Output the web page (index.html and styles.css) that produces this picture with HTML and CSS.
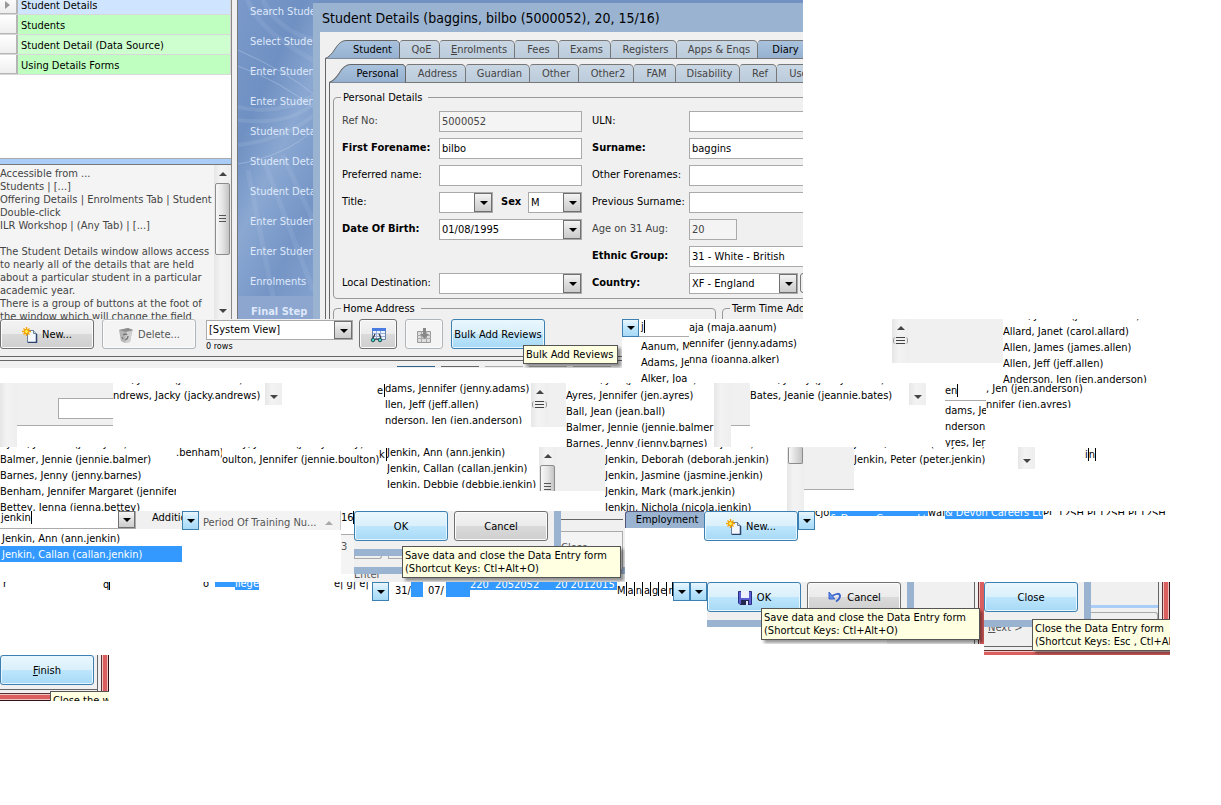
FILE: index.html
```html
<!DOCTYPE html>
<html lang="en">
<head>
<meta charset="utf-8">
<title>Student Details</title>
<link rel="stylesheet" href="styles.css">
</head>
<body>
<svg class="defs" aria-hidden="true">
  <defs>
    <linearGradient id="tabfill" x1="0" y1="0" x2="0" y2="1"><stop offset="0" stop-color="#a9c3de"/><stop offset="1" stop-color="#96b1d0"/></linearGradient>
    <symbol id="new" viewBox="0 0 16 16">
      <path d="M5.500 3.500h6l3 3v9h-9z" fill="#f4f8fd" stroke="#6b7f9e"/><path d="M14.500 7v8.500H6" fill="none" stroke="#2b446f" stroke-width="1.500"/><path d="M11.500 3.500v3h3" fill="#cfdcee" stroke="#6b7f9e"/>
      <path d="M4.500 0v9M0 4.500h9M1.500 1.500l6 6M7.500 1.500l-6 6" stroke="#f5a70a" stroke-width="1.400"/><circle cx="4.500" cy="4.500" r="2" fill="#fff04a" stroke="#f59b00"/>
    </symbol>
    <symbol id="bin" viewBox="0 0 16 16">
      <path d="M1 3l9-2 5 2-1 2-2 10-5 1-4-2z" fill="#b5b5b5"/><path d="M1 3l9-2 5 2-7 2z" fill="#8e8e8e"/><path d="M8 5l6-1-2 11-5 1z" fill="#d0d0d0"/><path d="M5 8q3-2 4 0M10 9q0 3-3 4M5 12l-1-2" fill="none" stroke="#777" stroke-width="1.300"/>
    </symbol>
    <symbol id="view" viewBox="0 0 16 16">
      <path d="M2.500 1.500h13v11h-13z" fill="#edf3fd" stroke="#6d83b5"/><path d="M2 1h14v3H2z" fill="#4a7be0"/><path d="M3 6.500h12M3 9.500h12M6.500 4v8M10.500 4v8" stroke="#9db1da"/><path d="M3 11l2-4M11 11l-2-4M5 12h4" stroke="#333" stroke-width="1.200"/><circle cx="3" cy="13" r="1.800" fill="#3fd6cf" stroke="#26504f"/><circle cx="10" cy="13" r="1.800" fill="#3fd6cf" stroke="#26504f"/>
    </symbol>
    <symbol id="export" viewBox="0 0 16 16">
      <path d="M1.500 4.500h13v11h-13z" fill="#ddd" stroke="#999"/><path d="M1 8.500h14M1 11.500h14M5.500 4v11M10.500 4v11" stroke="#aaa"/><path d="M7 1h3v6h3l-4.500 5L4 7h3z" fill="#888"/>
    </symbol>
    <symbol id="save" viewBox="0 0 16 16">
      <path d="M1.500 1.500h13v13H3l-1.500-1.500z" fill="#5a5fd0" stroke="#2c2f86"/><path d="M4 1h8v7H4z" fill="#eef1ff"/><path d="M4 10h8v5H4z" fill="#23264f"/><path d="M9 11h2v4H9z" fill="#dfe3ff"/>
    </symbol>
    <symbol id="undo" viewBox="0 0 16 16">
      <path d="M5 6q7-4 8-.5 0 3.500-4 6" fill="none" stroke="#3d66cc" stroke-width="2"/><path d="M2 2v7h6z" fill="#5f8ae6" stroke="#3d66cc"/>
    </symbol>
  </defs>
</svg>

<main class="sheet">
  <section class="band band-main">
    <div class="help-pane">
      <ul class="topics">
        <li class="topic current"><span class="handle"><i></i></span><span class="name">Student Details</span></li>
        <li class="topic"><span class="handle"></span><span class="name">Students</span></li>
        <li class="topic alt"><span class="handle"></span><span class="name">Student Detail (Data Source)</span></li>
        <li class="topic"><span class="handle"></span><span class="name">Using Details Forms</span></li>
      </ul>
      <div class="splitter"></div>
      <div class="notes">
        <p class="notes-text">Accessible from ...<br>Students | [...]<br>Offering Details | Enrolments Tab | Student<br>Double-click<br>ILR Workshop | (Any Tab) | [...]<br><br>The Student Details window allows access<br>to nearly all of the details that are held<br>about a particular student in a particular<br>academic year.<br>There is a group of buttons at the foot of<br>the window which will change the field</p>
        <div class="scroll full"><i class="up"></i><b class="thumb"></b><i class="down"></i></div>
      </div>
    </div>
    <div class="divider"></div>
    <nav class="steps">
      <svg class="swirl" viewBox="0 0 76 319" preserveAspectRatio="none" aria-hidden="true"><g fill="none" stroke="#c4d5ee"><path d="M0 66Q45 82 76 108M0 50Q50 72 76 94M0 164Q50 155 76 130" stroke-opacity=".4"/><path d="M0 107Q40 116 76 96M0 120Q50 126 76 104M0 145Q45 140 76 116" stroke-width="4" stroke-opacity=".15"/><path d="M26 160L76 290M10 170L40 319M45 155L76 220M10 0Q20 30 76 60M25 0Q40 30 76 40" stroke-width="5" stroke-opacity=".12"/></g></svg>
      <span>Search Student</span><span>Select Student</span><span>Enter Student</span><span>Enter Student</span><span>Student Details</span><span>Student Details</span><span>Student Details</span><span>Enter Student</span><span>Enter Student</span><span>Enrolments</span><strong>Final Step</strong>
    </nav>
    <div class="stage">
      <div class="window">
        <h1 class="title">Student Details (baggins, bilbo (5000052), 20, 15/16)</h1>
        <div class="client">
          <div class="tabs outer" role="tablist">
            <button class="tab lead w75" role="tab"><svg viewBox="0 0 75 19" aria-hidden="true"><path d="M0 18.500Q5 17 10 9Q15 .500 21 .500H72L74.500 3V18.500" fill="url(#tabfill)" stroke="#666"/></svg><span>Student</span></button><button class="tab w40" role="tab">QoE</button><button class="tab w75" role="tab"><span><u>E</u>nrolments</span></button><button class="tab w44" role="tab">Fees</button><button class="tab w52" role="tab">Exams</button><button class="tab w66" role="tab">Registers</button><button class="tab w81" role="tab">Apps &amp; Enqs</button><button class="tab on w52" role="tab">Diary</button>
          </div>
          <div class="page-outer">
            <div class="tabs inner" role="tablist">
              <button class="tab lead w77" role="tab"><svg viewBox="0 0 75 19" preserveAspectRatio="none" aria-hidden="true"><path d="M0 18.500Q5 17 10 9Q15 .500 21 .500H72L74.500 3V18.500" fill="url(#tabfill)" stroke="#666"/></svg><span>Personal</span></button><button class="tab w60" role="tab">Address</button><button class="tab w64" role="tab">Guardian</button><button class="tab w49" role="tab">Other</button><button class="tab w55" role="tab">Other2</button><button class="tab w42" role="tab">FAM</button><button class="tab w64" role="tab">Disability</button><button class="tab w37" role="tab">Ref</button><button class="tab w44" role="tab">User</button>
            </div>
            <div class="page-inner">
              <fieldset class="group personal">
                <legend>Personal Details</legend>
                <div class="form">
                  <label class="muted" for="ref">Ref No:</label><input id="ref" class="field ro" value="5000052" readonly>
                  <label for="uln">ULN:</label><input id="uln" class="field">
                  <label class="req" for="fore">First Forename:</label><input id="fore" class="field" value="bilbo">
                  <label class="req" for="sur">Surname:</label><input id="sur" class="field" value="baggins">
                  <label for="pref">Preferred name:</label><input id="pref" class="field">
                  <label for="oth">Other Forenames:</label><input id="oth" class="field">
                  <label for="ttl">Title:</label>
                  <div class="pair"><span class="combo"><select id="ttl"><option></option></select></span><label class="req" for="sex">Sex</label><span class="combo"><select id="sex"><option>M</option></select></span></div>
                  <label for="prev">Previous Surname:</label><input id="prev" class="field">
                  <label class="req" for="dob">Date Of Birth:</label><span class="combo"><select id="dob"><option>01/08/1995</option></select></span>
                  <label class="muted" for="age">Age on 31 Aug:</label><input id="age" class="field ro short" value="20" readonly>
                  <span></span><span></span>
                  <label class="req" for="eth">Ethnic Group:</label><input id="eth" class="field" value="31 - White - British">
                  <label for="dest">Local Destination:</label><span class="combo"><select id="dest"><option></option></select></span>
                  <label class="req" for="cty">Country:</label><div class="pair country"><span class="combo"><select id="cty"><option>XF - England</option></select></span><button class="mini" aria-label="More"></button></div>
                </div>
              </fieldset>
              <div class="addresses">
                <fieldset class="group"><legend>Home Address</legend></fieldset>
                <fieldset class="group"><legend>Term Time Address</legend></fieldset>
              </div>
            </div>
          </div>
        </div>
      </div>
    </div>
  </section>

  <section class="band">
    <div class="frag toolbar">
      <div class="tools">
        <button class="btn"><svg class="ico"><use href="#new"/></svg>New...</button>
        <button class="btn off"><svg class="ico"><use href="#bin"/></svg>Delete...</button>
        <div class="view"><span class="combo"><select aria-label="View"><option>[System View]</option></select></span><small>0 rows</small></div>
        <button class="btn square" aria-label="Find"><svg class="ico"><use href="#view"/></svg></button>
        <button class="btn square off" aria-label="Export"><svg class="ico"><use href="#export"/></svg></button>
        <button class="btn hot">Bulk Add Reviews</button>
      </div>
      <div class="rule"></div>
      <div class="stubs"><i class="blue"></i><i class="dark"></i><i></i><i></i><i></i></div>
      <div class="tip tip-bulk">Bulk Add Reviews</div>
    </div>
    <div class="frag w67 tall">
      <div class="entry"><button class="drop" aria-label="Open list"></button><span class="typed">j</span></div>
      <ul class="names inset"><li>Aanum, M</li><li>Adams, Je</li><li>Alker, Joa</li></ul>
    </div>
    <ul class="frag names w203 h44"><li>aja (maja.aanum)</li><li>ennifer (jenny.adams)</li><li>nna (joanna.alker)</li></ul>
    <div class="frag gray w111 h44"><div class="scroll"><i class="up"></i><b class="grip"></b></div></div>
    <ul class="frag names scrolled w203 tall"><li>Alker, Joanna (joanna.alker)</li><li>Allard, Janet (carol.allard)</li><li>Allen, James (james.allen)</li><li>Allen, Jeff (jeff.allen)</li><li>Anderson, Jen (jen.anderson)</li></ul>
  </section>

  <section class="band">
    <div class="frag w113 tall row"><div class="scroll"></div><div class="plate"><span class="box"></span></div></div>
    <ul class="frag names scrolled w152 tall"><li>lker, Joanna (joanna.alker)</li><li>ndrews, Jacky (jacky.andrews)</li></ul>
    <div class="frag w112 h22"><div class="scroll"><i class="down"></i></div></div>
    <div class="frag w8 typed low">e</div>
    <ul class="frag names raised w146 h41"><li>dams, Jennifer (jenny.adams)</li><li>llen, Jeff (jeff.allen)</li><li>nderson, Jen (jen.anderson)</li></ul>
    <div class="frag gray w35 h44"><div class="scroll"><i class="up"></i><b class="grip"></b></div></div>
    <ul class="frag names scrolled w148 tall"><li>derson, Jen (jen.anderson)</li><li>Ayres, Jennifer (jen.ayres)</li><li>Ball, Jean (jean.ball)</li><li>Balmer, Jennie (jennie.balmer)</li><li>Barnes, Jenny (jenny.barnes)</li></ul>
    <div class="frag w36 tall row"><div class="scroll"></div><div class="plate"></div></div>
    <ul class="frag names scrolled w159 tall"><li>arnes, Jenny (jenny.barnes)</li><li>Bates, Jeanie (jeannie.bates)</li></ul>
    <div class="frag w36 h22"><div class="scroll"><i class="down"></i></div></div>
    <div class="frag w41 tall"><div class="entry plain"><span class="typed">en</span></div><ul class="names"><li>dams, Je</li><li>nderson,</li><li>yres, Jer</li></ul></div>
    <ul class="frag names raised w203 h25"><li>, Jen (jen.anderson)</li><li>nnifer (jen.ayres)</li></ul>
  </section>

  <section class="band">
    <ul class="frag names scrolled w176 tall"><li>Ayres, Jennifer (jen.ayres)</li><li>Balmer, Jennie (jennie.balmer)</li><li>Barnes, Jenny (jenny.barnes)</li><li>Benham, Jennifer Margaret (jennifer</li><li>Bettey, Jenna (jenna.bettey)</li></ul>
    <ul class="frag names raised w46 h41"><li>.benham)</li></ul>
    <ul class="frag names scrolled w157 tall"><li>ettey, Jennifer (jenny.bettey)</li><li>oulton, Jennifer (jennie.boulton)</li></ul>
    <div class="frag w8 typed low">k</div>
    <ul class="frag names raised w152 h41"><li>Jenkin, Ann (ann.jenkin)</li><li>Jenkin, Callan (callan.jenkin)</li><li>Jenkin, Debbie (debbie.jenkin)</li></ul>
    <div class="frag gray w66 h44"><div class="scroll"><i class="up"></i><b class="thumb"></b></div></div>
    <ul class="frag names scrolled w182 tall"><li>Jenkin, Debbie (debbie.jenkin)</li><li>Jenkin, Deborah (deborah.jenkin)</li><li>Jenkin, Jasmine (jasmine.jenkin)</li><li>Jenkin, Mark (mark.jenkin)</li><li>Jenkin, Nichola (nicola.jenkin)</li></ul>
    <div class="frag w67 tall row"><div class="scroll"><b class="thumb end"></b></div><div class="plate"></div></div>
    <ul class="frag names scrolled w164 tall"><li>Jenkin, Nichola (nic.jenkin)</li><li>Jenkin, Peter (peter.jenkin)</li></ul>
    <div class="frag w67 h22"><div class="scroll"><i class="down"></i></div></div>
    <div class="frag typed low"><span class="typed">i</span>n</div>
  </section>

  <section class="band band-low">
    <div class="frag w182 picker">
      <div class="row"><div class="search"><span class="typed">jenkin</span><button class="drop plain" aria-label="Open list"></button></div><span class="side">Additic</span></div>
      <ul class="names padded"><li>Jenkin, Ann (ann.jenkin)</li><li class="picked">Jenkin, Callan (callan.jenkin)</li></ul>
    </div>
    <button class="drop" aria-label="Open list"></button>
    <div class="head"><span>Period Of Training Nu...</span><i class="asc"></i></div>
    <div class="frag w13 cells"><span class="typed">16</span><span class="cell">3</span></div>
    <div class="frag dialog w271">
      <div class="actions"><button class="btn hot">OK</button><button class="btn">Cancel</button></div>
      <div class="under"><i></i><i></i></div>
      <div class="foot"><span>Enter</span></div>
      <div class="corner"><span>Close</span></div>
      <div class="edge"></div>
      <div class="tip tip-save">Save data and close the Data Entry form<br>(Shortcut Keys: Ctl+Alt+O)</div>
    </div>
    <button class="employment">Employment</button>
    <button class="btn hot"><svg class="ico"><use href="#new"/></svg>New...</button>
    <button class="drop" aria-label="Open list"></button>
    <div class="shards top"><span class="w15">cjorn</span><mark class="w98 cut">&amp; Devon Careers Ltd</mark><span class="w17">wall</span><mark class="w98">&amp; Devon Careers Ltd</mark><span class="faded">PL 12SH PL12SH PL12SH</span></div>
  </section>

  <section class="band band-low">
    <div class="shards low"><span class="w100">r</span><span class="w100"><span class="typed">q</span></span><span class="w12">o</span><mark class="w20 block"></mark><mark class="w24">llege</mark><span class="w75"></span><span>e| g| e|</span></div>
    <button class="drop" aria-label="Open list"></button>
    <div class="dates"><span>31/</span><mark></mark><span class="w17">07/</span><mark class="w24"></mark><mark class="strip">220 &nbsp;2052052 &nbsp; &nbsp; 20 2012015</mark></div>
    <div class="letters"><span>M</span><span>a</span><span>n</span><span>a</span><span>g</span><span>e</span><span>r</span></div>
    <button class="drop" aria-label="Open list"></button><button class="drop" aria-label="Open list"></button>
    <div class="frag dialog framed w277">
      <div class="actions"><button class="btn hot"><svg class="ico"><use href="#save"/></svg>OK</button><button class="btn"><svg class="ico"><use href="#undo"/></svg>Cancel</button></div>
      <div class="edge"></div>
      <div class="redline"></div>
      <div class="tip tip-save2">Save data and close the Data Entry form<br>(Shortcut Keys: Ctl+Alt+O)</div>
    </div>
    <div class="frag dialog close-box w186">
      <div class="actions"><button class="btn hot">Close</button></div>
      <div class="edge"></div>
      <div class="panel-end"></div>
      <div class="redline"></div>
      <div class="foot"><span><u>N</u>ext &gt;</span></div>
      <div class="redfoot"></div>
      <div class="tip tip-close">Close the Data Entry form<br>(Shortcut Keys: Esc , Ctl+Alt+C)</div>
    </div>
  </section>

  <section class="band">
    <div class="frag dialog finish w109">
      <div class="actions"><button class="btn hot"><span><u>F</u>inish</span></button></div>
      <div class="redfoot"></div>
      <div class="redline"></div>
      <div class="tip tip-finish">Close the window</div>
    </div>
  </section>
</main>
</body>
</html>
```
FILE: styles.css
```css
* { box-sizing: border-box; }
body { margin: 0; background: #fff; color: #000; font: 11px/16px "DejaVu Sans Condensed", "DejaVu Sans", sans-serif; font-stretch: condensed; overflow: hidden; }
button, input, select { font: inherit; color: inherit; margin: 0; padding: 0; border-radius: 0; }
ul { list-style: none; margin: 0; padding: 0; }
p { margin: 0; }
.defs { position: absolute; width: 0; height: 0; }
.band { display: flex; align-items: flex-start; min-height: 64px; white-space: nowrap; }
.band-main { height: 319px; max-width: 803px; overflow: hidden; }
.band-low { min-height: 71px; }
.band-low + .band-low { min-height: 73px; }
.frag { flex: none; overflow: hidden; position: relative; }
.row { display: flex; align-items: flex-start; }

.w8 { width: 8px; } .w12 { width: 12px; } .w13 { width: 13px; } .w15 { width: 15px; } .w17 { width: 17px; }
.w20 { width: 20px; } .w24 { width: 24px; } .w35 { width: 35px; } .w36 { width: 36px; }
.w37 { width: 37px; } .w40 { width: 40px; } .w41 { width: 41px; } .w42 { width: 42px; } .w44 { width: 44px; }
.w46 { width: 46px; } .w49 { width: 49px; } .w52 { width: 52px; } .w55 { width: 55px; } .w60 { width: 60px; }
.w64 { width: 64px; } .w66 { width: 66px; } .w67 { width: 67px; } .w75 { width: 75px; } .w77 { width: 77px; }
.w81 { width: 81px; } .w98 { width: 98px; } .w100 { width: 100px; } .w109 { width: 109px; }
.w111 { width: 111px; } .w112 { width: 112px; } .w113 { width: 113px; } .w146 { width: 146px; } .w148 { width: 148px; }
.w152 { width: 152px; } .w157 { width: 157px; } .w159 { width: 159px; } .w164 { width: 164px; } .w176 { width: 176px; }
.w182 { width: 182px; } .w186 { width: 186px; } .w203 { width: 203px; } .w271 { width: 271px; } .w277 { width: 277px; }
.tall { height: 64px; } .h22 { height: 22px; } .h25 { height: 25px; } .h41 { height: 41px; } .h44 { height: 44px; }

/* help pane */
.help-pane { width: 231px; height: 319px; flex: none; display: flex; flex-direction: column; }
.topics { height: 159px; overflow: hidden; border-bottom: 1px solid #aaa; }
.topic { display: flex; height: 20px; background: #bfffbf; border-bottom: 1px solid #d8d8d8; border-right: 1px solid #d8d8d8; }
.topic.alt { background: #ceffce; }
.topic.current { margin-top: -5px; background: #cfe5ff; }
.handle { width: 18px; flex: none; background: linear-gradient(#fff, #eee); border-right: 2px solid #b5b5b5; border-bottom: 1px solid #b5b5b5; }
.handle i { display: block; margin: 6px 5px; border: 4px solid transparent; border-left: 5px solid #999; border-right: 0; }
.name { padding-left: 3px; line-height: 22px; }
.splitter { height: 5px; background: #a9cdf7; }
.notes { flex: 1; min-height: 0; display: flex; overflow: hidden; background: #f4f4f4; border-top: 1px solid #777; }
.notes-text { flex: 1; min-width: 0; padding-top: 2px; line-height: 13px; color: #444; }
.divider { width: 7px; height: 319px; flex: none; background: #f0f0f0; border-left: 1px solid #888; border-right: 1px solid #777; }

/* scroll bars */
.scroll { width: 17px; height: 100%; flex: none; background: linear-gradient(90deg, #e6e6e6, #f3f3f3 40%, #eee); display: flex; flex-direction: column; align-items: center; overflow: hidden; }
.up, .down { flex: none; width: 0; height: 0; border: 4px solid transparent; }
.up { border-bottom-color: #444; border-top: 0; margin: 7px 0; }
.down { border-top-color: #444; border-bottom: 0; margin: auto 0 6px; }
.thumb { flex: none; width: 15px; height: 72px; border: 1px solid #8c8c8c; border-radius: 2px; background: repeating-linear-gradient(#555 0 1px, transparent 1px 3px) 50% 50% / 7px 9px no-repeat, linear-gradient(90deg, #f8f8f8, #e4e4e4 50%, #c4c4c6); }
.h44 .thumb { height: 44px; }
.thumb.end { height: 17px; background: linear-gradient(90deg, #f8f8f8, #c4c4c6); border-top: 0; }
.grip { width: 15px; height: 7px; border: 1px solid #999; border-width: 0 1px; border-radius: 3px; background: repeating-linear-gradient(#444 0 1px, transparent 1px 3px) 50% 50% / 9px 7px no-repeat; }
.gray { background: #f0f0f0; }

/* steps */
.steps { position: relative; width: 75px; height: 319px; flex: none; overflow: hidden; background: linear-gradient(115deg, #7b9acb, #6f90c2 30%, #8ba8d2 50%, #7595c6 75%, #86a3cf); color: #dfe9fb; display: flex; flex-direction: column; }
.swirl { position: absolute; inset: 0; width: 100%; height: 100%; }
.steps span, .steps strong { position: relative; flex: none; height: 30px; line-height: 32px; padding-left: 12px; }
.steps span:first-of-type { margin-top: -4px; }
.steps strong { background: #8ca6cf; padding-left: 13px; }
.stage { flex: 1; height: 319px; min-width: 0; padding-top: 3px; background: #7192c3; overflow: hidden; }

/* window */
.window { background: #9ab3d1; padding-left: 7px; height: 316px; }
.title { margin: 0; font-size: 14px; font-weight: 400; line-height: 30px; height: 29px; padding-left: 2px; }
.client { background: #f0f0f0; padding: 8px 0 0 5px; height: 290px; overflow: hidden; }
.tabs { display: flex; height: 19px; border-bottom: 1px solid #666; }
.tab { position: relative; flex: none; height: 19px; border: 1px solid #777; border-left: 0; border-radius: 3px 5px 0 0; background: linear-gradient(#c9d7e4, #bccbdb); color: #444; line-height: 17px; padding-left: 4px; }
.tab.on { background: linear-gradient(#a9c3de, #96b1d0); color: #000; }
.tab.lead { border: 0; background: none; color: #000; padding-left: 20px; }
.tab.lead svg { position: absolute; left: 0; top: 0; width: 100%; height: 19px; }
.tab.lead span { position: relative; }
.page-outer { border-left: 1px solid #666; padding: 5px 0 0 3px; }
.page-inner { border-left: 1px solid #666; padding: 8px 0 0 3px; }
.group { margin: 0; padding: 0 0 0 8px; border: 1px solid #999; border-radius: 4px; min-width: 0; }
.group legend { padding: 0 6px 0 2px; margin-left: -1px; line-height: 13px; }
.personal { margin-right: -8px; height: 208px; }
.form { display: grid; grid-template-columns: 97px 153px 97px minmax(0, 1fr); grid-auto-rows: 21px; row-gap: 6px; margin-top: 7px; }
.form label { line-height: 20px; }
.muted { color: #444; }
.req { font-weight: 700; }
.field { width: 100%; height: 21px; border: 1px solid #aaa; background: #fff; padding-left: 2px; outline: 0; }
.form > .field:nth-child(4n+2), .form > .combo { width: 143px; }
.ro { background: #f4f4f4; color: #444; }
.form > .field.short { width: 48px; }
.pair { display: grid; grid-template-columns: 54px 35px 54px; align-items: start; }
.pair .req { padding-left: 8px; }
.pair.country { grid-template-columns: 109px 20px; gap: 2px; }
.mini { height: 20px; border: 1px solid #777; border-radius: 3px; background: #eee; }
.combo { position: relative; display: block; height: 21px; }
.combo select { appearance: none; width: 100%; height: 100%; border: 1px solid #aaa; background: #fff; padding: 0 18px 0 2px; outline: 0; }
.combo::after { content: ""; position: absolute; right: 1px; top: 1px; width: 16px; bottom: 1px; border: 1px solid #707070; background: linear-gradient(#f4f4f4, #ddd 50%, #ccc); pointer-events: none; }
.combo::before { content: ""; position: absolute; z-index: 1; right: 5px; top: 9px; border: 4px solid transparent; border-top-color: #000; border-bottom: 0; pointer-events: none; }
.addresses { display: grid; grid-template-columns: 383px 120px; gap: 6px; margin-top: 3px; }
.addresses .group { height: 60px; }

/* buttons */
.btn { flex: none; width: 94px; height: 30px; padding-top: 2px; display: flex; align-items: center; justify-content: center; gap: 4px; border: 1px solid #707070; border-radius: 3px; background: linear-gradient(#f3f3f3, #ebebeb 50%, #dadada 50%, #cfcfcf); box-shadow: inset 0 0 0 1px #fbfbfb; }
.btn.hot { border-color: #3c7fb1; background: linear-gradient(#eaf6fd, #d9f0fc 50%, #bee6fd 50%, #a7d9f5); box-shadow: inset 0 0 0 1px #e8f6fd; }
.btn.off { border-color: #b0b5ba; background: #f4f4f4; color: #555; }
.btn.square { width: 38px; }
.ico { width: 16px; height: 16px; flex: none; }
.drop { flex: none; width: 17px; height: 19px; border: 1px solid #3c7fb1; background: linear-gradient(#eaf6fd, #bee6fd 50%, #a7d9f5); display: flex; align-items: center; justify-content: center; }
.drop::before { content: ""; border: 4px solid transparent; border-top-color: #000; border-bottom: 0; }
.drop.plain { height: 17px; border-color: #707070; background: linear-gradient(#f4f4f4, #ccc); }
.tip { position: absolute; z-index: 2; padding: 2px; line-height: 13px; background: #ffffe1; border: 1px solid #555; box-shadow: 3px 3px 3px rgba(0, 0, 0, .4); }
.tip-bulk { left: 523px; top: 26px; width: 95px; height: 19px; }
.tip-save { left: 48px; top: 35px; width: 219px; height: 32px; }
.tip-save2 { left: 54px; top: 26px; width: 219px; height: 32px; }
.tip-close { left: 48px; top: 37px; width: 219px; height: 32px; }
.tip-finish { left: 50px; top: 36px; width: 120px; height: 19px; }

/* toolbar */
.toolbar { width: 622px; height: 49px; background: #f0f0f0; }
.tools { display: flex; gap: 8px; height: 37px; }
.view { width: 149px; padding: 1px 0 0 2px; margin-right: -2px; }
.view .combo { height: 20px; }
.view small { display: block; font-size: 9px; line-height: 12px; }
.rule { height: 5px; border: 1px solid #666; border-width: 1px 0; }
.stubs { display: flex; gap: 6px; margin: 5px 0 0 397px; }
.stubs i { width: 38px; height: 2px; border-top: 1px solid #aaa; }
.stubs .blue { border-color: #2c628b; } .stubs .dark { border-color: #666; }

/* name lists */
.names li { height: 16px; line-height: 18px; white-space: pre; }
.scrolled li:first-child { margin-top: -12px; }
.raised li:first-child { margin-top: -3px; }
.inset { padding-left: 19px; }
.padded { padding-top: 1px; }
.padded li { padding-left: 2px; }
.picked { background: #3399ff; color: #fff; }
.entry { display: flex; height: 18px; margin-bottom: 1px; background: linear-gradient(#aaa, #aaa) bottom / 100% 1px no-repeat; }
.typed { border-right: 1px solid #000; height: 13px; line-height: 14px; }
.entry .drop { height: 18px; }
.entry .typed { margin: 1px 0 0 2px; }
.entry.plain .typed { margin-left: 0; }
.low { margin-top: 1px; }
.plate { flex: 1; height: 43px; background: #f0f0f0; border-bottom: 1px solid #aaa; padding: 15px 0 0 41px; }
.box { display: block; height: 21px; border: 1px solid #aaa; border-right: 0; background: #fff; }
.plate:empty { padding: 0; }

/* lower fragments */
.search { display: flex; justify-content: space-between; width: 136px; height: 18px; border: 1px solid #aaa; border-width: 0 1px 1px 0; }
.search .typed { padding-left: 1px; }
.side { width: 46px; height: 18px; line-height: 14px; padding-left: 16px; background: #f0f0f0; overflow: hidden; }
.head { flex: none; width: 142px; height: 19px; display: flex; align-items: center; justify-content: space-between; padding: 4px 7px 0 4px; background: #f3f3f3; border-right: 1px solid #ccc; color: #555; }
.asc { border: 4px solid transparent; border-bottom-color: #aaa; border-top: 0; }
.cells { height: 71px; display: flex; flex-direction: column; }
.cell { height: 40px; margin-top: 10px; padding-top: 4px; border-top: 1px solid #aaa; color: #555; background: #f4f4f4; }
.dialog { background: #f0f0f0; height: 71px; }
.actions { display: flex; gap: 6px; height: 38px; }
.edge { position: absolute; left: 200px; top: 0; width: 7px; height: 45px; background: #9ab3d1; }
.under { height: 25px; border: solid #9ab3d1; border-width: 7px 0; display: flex; gap: 6px; }
.under i { width: 28px; height: 3px; border: 1px solid #aaa; border-top: 0; border-radius: 0 0 3px 0; }
.corner { position: absolute; left: 207px; top: 0; width: 64px; height: 56px; padding: 8px 2px 0 0; background: #f0f0f0; }
.corner::before { content: ""; display: block; height: 11px; border-top: 1px solid #666; border-bottom: 1px solid #aaa; }
.corner span { display: block; line-height: 13px; height: 37px; padding-top: 9px; color: #555; border-right: 1px solid #aaa; background: #f4f4f4; }
.foot { height: 8px; overflow: hidden; color: #555; }
.foot span { display: block; margin-top: -7px; }
.employment { flex: none; width: 79px; height: 17px; border: 1px solid #557; border-width: 1px 0 0 1px; border-radius: 3px 0 0 0; background: #9ab3d1; padding-left: 4px; }
.shards { display: flex; overflow: hidden; }
.shards > * { flex: none; overflow: hidden; height: 12px; line-height: 12px; }
.shards.top { height: 8px; }
.shards.top > * { margin-top: -4px; }
.shards.top .cut { margin-top: 0; height: 5px; line-height: 16px; }
.shards.top .faded { height: 8px; line-height: 14px; }
mark { background: #3399ff; color: #fff; }
.shards.low { width: 372px; height: 8px; padding-left: 3px; margin: 0; flex: none; }
.shards.low > * { margin-top: -4px; }
.shards.low .block { height: 9px; }
.dates { width: 228px; flex: none; display: flex; padding-left: 6px; align-items: flex-start; }
.dates span, .dates mark:not(.strip) { height: 15px; line-height: 18px; }
.dates > mark:first-of-type { width: 12px; margin-right: 5px; }
.dates > .w24 { margin-left: 1px; }
.dates > .strip { flex: 1; min-width: 0; height: 8px; line-height: 6px; overflow: hidden; }
.letters { width: 56px; flex: none; display: flex; gap: 1px; overflow: hidden; }
.letters span { border-right: 1px solid #000; height: 14px; line-height: 18px; }
.framed { height: 62px; }
.framed::before { content: ""; position: absolute; top: 38px; width: 200px; height: 7px; background: #9ab3d1; }
.framed::after { content: ""; position: absolute; top: 45px; width: 180px; height: 17px; background: #fff; }
.redline { position: absolute; top: 0; right: 0; height: 100%; width: 12px; background: linear-gradient(90deg, #666 1px, #f0f0f0 1px 4px, #5e3030 4px 5px, #efc4c4 5px 6px, #dc5f5f 6px 10px, #efc4c4 10px 11px, #301015 11px); }
.framed .redline { width: 10px; }
.redfoot { position: absolute; left: 0; right: 0; bottom: 0; height: 12px; background: linear-gradient(#666 1px, #f0f0f0 1px 4px, #5e3030 4px 5px, #efc4c4 5px 6px, #dc5f5f 6px 10px, #efc4c4 10px 11px, #301015 11px); }
.close-box { height: 73px; }
.close-box::before { content: ""; position: absolute; left: 0; top: 38px; width: 107px; height: 7px; background: #9ab3d1; }
.close-box .edge { left: 100px; }
.close-box .foot { height: 18px; margin-top: 7px; }
.close-box .foot span { margin-top: -7px; padding-left: 4px; }
.close-box .redfoot { height: 9px; }
.panel-end { position: absolute; left: 107px; top: 23px; width: 67px; height: 20px; border-top: 3px solid #a9cdf7; }
.panel-end::after { content: ""; display: block; margin-top: 4px; height: 8px; border: 1px solid #aaa; border-left: 0; border-bottom: 0; border-radius: 0 3px 0 0; }
.finish { height: 46px; }
```
